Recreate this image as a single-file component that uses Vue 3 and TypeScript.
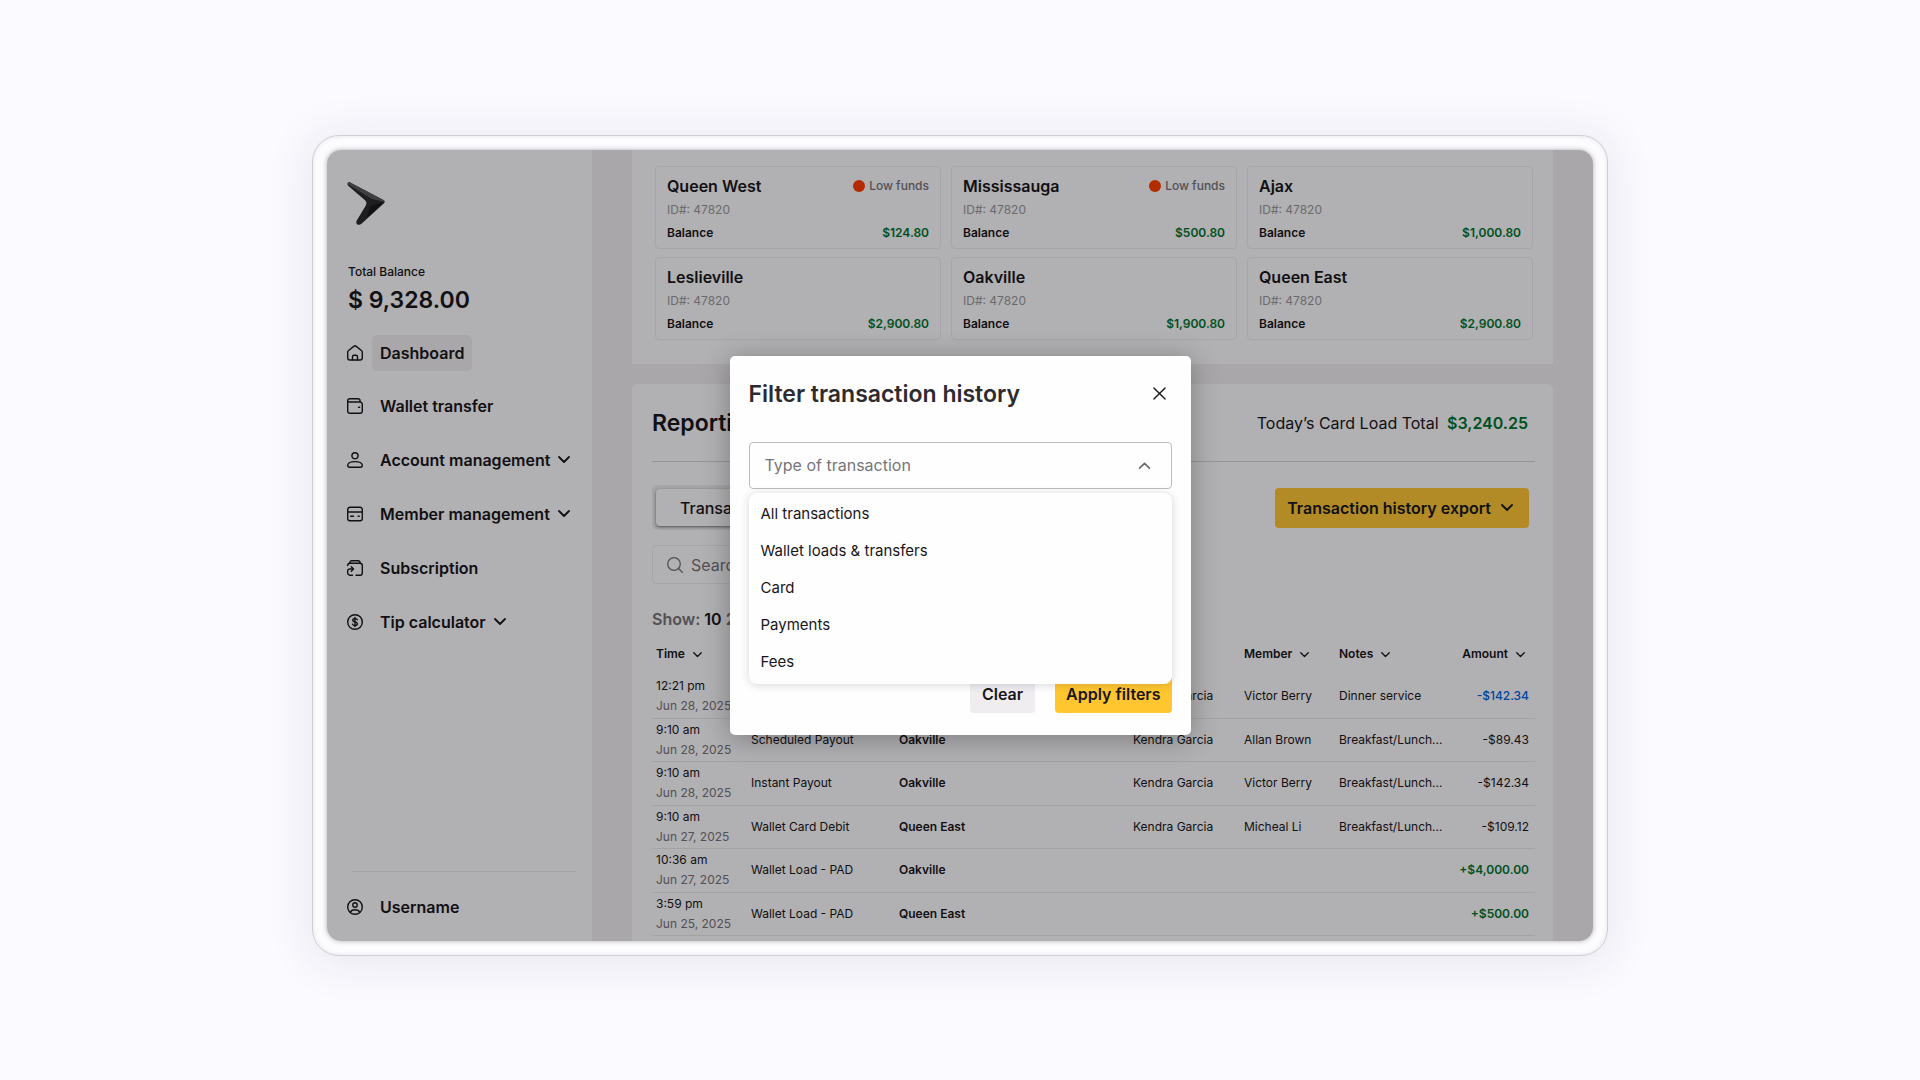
<script setup lang="ts">
import { ref } from 'vue'

interface NavItem { label: string; icon: string[]; active?: boolean; expandable?: boolean }
interface Wallet { name: string; balance: string; low?: boolean }
interface Row { time: string; date: string; type: string; wallet: string; by: string; member: string; notes: string; amount: string; tone?: string }

const nav: NavItem[] = [
  { label: 'Dashboard', active: true, icon: ['M.7 7.2c0-.8.3-1.300.9-1.700L7.100 1.100a1.500 1.500 0 0 1 1.800 0l5.500 4.400c.6.4.9.9.9 1.700v5.600a2.200 2.200 0 0 1-2.200 2.200H2.900a2.200 2.200 0 0 1-2.200-2.200z', 'M5.500 15v-3.200A1.500 1.500 0 0 1 7 10.300h2a1.500 1.500 0 0 1 1.500 1.500V15'] },
  { label: 'Wallet transfer', icon: ['M13 4V2.500A1.800 1.800 0 0 0 11.200.7H2.700a2 2 0 0 0-2 2V13A2.300 2.300 0 0 0 3 15.300h10a2.300 2.300 0 0 0 2.300-2.300V6.200A2.200 2.200 0 0 0 13.100 4H2.600A1.800 1.800 0 0 1 .9 3', 'M11.600 9.300h1'] },
  { label: 'Account management', expandable: true, icon: ['M8 .7a3.100 3.100 0 1 1 0 6.200A3.100 3.100 0 0 1 8 .7z', 'M8 9.600c4.400 0 7.300 1.700 7.300 3.700 0 1.200-.7 2-1.900 2H2.600c-1.200 0-1.900-.8-1.900-2 0-2 2.900-3.700 7.300-3.700z'] },
  { label: 'Member management', expandable: true, icon: ['M2.900 1.300h10.200a2.200 2.200 0 0 1 2.200 2.200v9a2.200 2.200 0 0 1-2.200 2.200H2.900a2.200 2.200 0 0 1-2.200-2.200v-9a2.200 2.200 0 0 1 2.200-2.200z', 'M.7 6h14.600', 'M3.700 10.300h2.800', 'M11.200 10.300h1'] },
  { label: 'Subscription', icon: ['M.7 5.500a2.200 2.200 0 0 1 2.200-2.200h10.200a2.200 2.200 0 0 1 2.200 2.200v7.600a2.200 2.200 0 0 1-2.200 2.200H9', 'M2.900 3.200C2.900 1.500 3.600.7 5 .7h6c1.400 0 2.100.8 2.100 2.500', 'M5.500 15.300H3.300a2.600 2.600 0 0 1-2.600-2.600V11a2 2 0 0 1 2-2h3.500', 'M4.300 6.800 6.500 9l-2.200 2.200'] },
  { label: 'Tip calculator', expandable: true, icon: ['M8 .7a7.300 7.300 0 1 1 0 14.600A7.300 7.300 0 0 1 8 .7z', 'M10.300 5.800C10 5 9.200 4.600 8 4.600c-1.400 0-2.300.6-2.300 1.600C5.700 8.500 10.400 7.400 10.400 9.800c0 1-1 1.700-2.400 1.700-1.300 0-2.200-.5-2.500-1.400', 'M8 3.400v9.200'] }
]

const wallets: Wallet[] = [
  { name: 'Queen West', balance: '$124.80', low: true },
  { name: 'Mississauga', balance: '$500.80', low: true },
  { name: 'Ajax', balance: '$1,000.80' },
  { name: 'Leslieville', balance: '$2,900.80' },
  { name: 'Oakville', balance: '$1,900.80' },
  { name: 'Queen East', balance: '$2,900.80' }
]

const columns = ['Time', 'Type', 'Location', 'By', 'Member', 'Notes', 'Amount']

const rows: Row[] = [
  { time: '12:21 pm', date: 'Jun 28, 2025', type: 'Instant Payout', wallet: 'Oakville', by: 'Kendra Garcia', member: 'Victor Berry', notes: 'Dinner service', amount: '-$142.34', tone: 'pending' },
  { time: '9:10 am', date: 'Jun 28, 2025', type: 'Scheduled Payout', wallet: 'Oakville', by: 'Kendra Garcia', member: 'Allan Brown', notes: 'Breakfast/Lunch...', amount: '-$89.43' },
  { time: '9:10 am', date: 'Jun 28, 2025', type: 'Instant Payout', wallet: 'Oakville', by: 'Kendra Garcia', member: 'Victor Berry', notes: 'Breakfast/Lunch...', amount: '-$142.34' },
  { time: '9:10 am', date: 'Jun 27, 2025', type: 'Wallet Card Debit', wallet: 'Queen East', by: 'Kendra Garcia', member: 'Micheal Li', notes: 'Breakfast/Lunch...', amount: '-$109.12' },
  { time: '10:36 am', date: 'Jun 27, 2025', type: 'Wallet Load - PAD', wallet: 'Oakville', by: '', member: '', notes: '', amount: '+$4,000.00', tone: 'credit' },
  { time: '3:59 pm', date: 'Jun 25, 2025', type: 'Wallet Load - PAD', wallet: 'Queen East', by: '', member: '', notes: '', amount: '+$500.00', tone: 'credit' }
]

const types = ['All transactions', 'Wallet loads & transfers', 'Card', 'Payments', 'Fees']
const selected = ref('')
const menuOpen = ref(true)
const search = ref('')

function choose(type: string) {
  selected.value = type
  menuOpen.value = false
}
function clear() {
  selected.value = ''
}
</script>

<template>
  <div class="stage">
    <div class="device">
      <div class="screen">
        <aside class="sidebar">
          <svg class="logo" viewBox="0 0 38 44" aria-hidden="true">
            <path d="M2.200.6 36.400 18.600q2.400 1.500.3 3.500L14.500 42.200q-2 1.600-4.200.7-1.600-1.300-.7-3.600L18.800 24q1.400-2.600-.5-4.900L.9 3.900Q-.6 1.300 2.200.6z" fill="#2c2a2e" />
            <path d="M2.200.6 36.400 18.600q1.300.8 1.200 1.900L25 17.500.9 2.700Q.7 1 2.200.6z" fill="#5c5a5f" />
            <path d="M23 25 37 20.500 20 36z" fill="#19171b" />
          </svg>
          <p class="total-label">Total Balance</p>
          <p class="total">$ 9,328.00</p>
          <nav class="nav">
            <a v-for="item in nav" :key="item.label" href="#" class="nav-item" :class="{ active: item.active }">
              <svg class="nav-icon" viewBox="0 0 16 16" aria-hidden="true"><path v-for="d in item.icon" :key="d" :d="d" /></svg>
              <span class="nav-label">{{ item.label }}</span>
              <svg v-if="item.expandable" class="chevron" viewBox="0 0 12 8" aria-hidden="true"><path d="m1 1 5 5 5-5" /></svg>
            </a>
          </nav>
          <a href="#" class="user">
            <svg class="nav-icon" viewBox="0 0 16 16" aria-hidden="true"><circle cx="8" cy="8" r="7.300" /><circle cx="8" cy="6" r="2.200" /><path d="M3.300 13.400c.6-1.800 2.400-2.700 4.700-2.700s4.100.9 4.700 2.700" /></svg>
            <span class="nav-label">Username</span>
          </a>
        </aside>

        <main class="main">
          <section class="panel wallets">
            <article v-for="w in wallets" :key="w.name" class="wallet">
              <div class="line">
                <h3>{{ w.name }}</h3>
                <span v-if="w.low" class="low"><i class="dot"></i>Low funds</span>
              </div>
              <p class="id">ID#: 47820</p>
              <div class="line balance"><span>Balance</span><span class="green">{{ w.balance }}</span></div>
            </article>
          </section>

          <section class="panel report">
            <header class="report-head">
              <h2>Reporting</h2>
              <p class="load">Today’s Card Load Total <strong class="green">$3,240.25</strong></p>
            </header>
            <div class="toolbar">
              <div class="tabs">
                <button type="button" class="tab current">Transactions</button>
                <button type="button" class="tab">Members</button>
              </div>
              <button type="button" class="export">
                Transaction history export
                <svg class="chevron" viewBox="0 0 12 8" aria-hidden="true"><path d="m1 1 5 5 5-5" /></svg>
              </button>
            </div>
            <label class="search">
              <svg viewBox="0 0 16 16" aria-hidden="true"><circle cx="7" cy="7" r="6.300" /><path d="m11.500 11.500 4 4" /></svg>
              <input v-model="search" type="search" placeholder="Search" aria-label="Search" />
            </label>
            <p class="show">Show: <b>10</b> 25 50</p>
            <table class="history">
              <colgroup><col class="c-time" /><col class="c-type" /><col /><col class="c-by" /><col class="c-member" /><col class="c-notes" /><col class="c-amount" /></colgroup>
              <thead>
                <tr>
                  <th v-for="c in columns" :key="c" scope="col">{{ c }}<svg class="sort" viewBox="0 0 12 8" aria-hidden="true"><path d="m1 1 5 5 5-5" /></svg></th>
                </tr>
              </thead>
              <tbody>
                <tr v-for="(r, i) in rows" :key="i">
                  <td><span class="time">{{ r.time }}</span><span class="date">{{ r.date }}</span></td>
                  <td>{{ r.type }}</td>
                  <td class="strong">{{ r.wallet }}</td>
                  <td>{{ r.by }}</td>
                  <td>{{ r.member }}</td>
                  <td>{{ r.notes }}</td>
                  <td class="amount" :class="r.tone">{{ r.amount }}</td>
                </tr>
              </tbody>
            </table>
          </section>
        </main>

        <div class="backdrop">
          <form class="modal" role="dialog" aria-labelledby="filter-title" @submit.prevent>
            <header class="modal-head">
              <h1 id="filter-title">Filter transaction history</h1>
              <button type="button" class="close" aria-label="Close">
                <svg viewBox="0 0 14 14" aria-hidden="true"><path d="m1 1 12 12M13 1 1 13" /></svg>
              </button>
            </header>
            <div class="field">
              <select v-model="selected" aria-label="Type of transaction" @mousedown.prevent="menuOpen = !menuOpen">
                <option value="">Type of transaction</option>
                <option v-for="t in types" :key="t" :value="t">{{ t }}</option>
              </select>
              <svg class="caret" viewBox="0 0 12 8" aria-hidden="true"><path d="m1.500 6.500 4.500-4.500 4.500 4.500" /></svg>
              <ul v-if="menuOpen" class="menu">
                <li v-for="t in types" :key="t"><button type="button" @click="choose(t)">{{ t }}</button></li>
              </ul>
            </div>
            <footer class="actions">
              <button type="button" class="clear" @click="clear">Clear</button>
              <button type="submit" class="apply">Apply filters</button>
            </footer>
          </form>
        </div>
      </div>
    </div>
  </div>
</template>

<style>
body {
  margin: 0;
  background: #fafaff;
}
</style>

<style scoped>
* {
  box-sizing: border-box;
}
h1, h2, h3, p, ul {
  margin: 0;
  padding: 0;
}
button, input, select {
  font: inherit;
  color: inherit;
  border: 0;
  background: none;
  padding: 0;
}
button {
  cursor: pointer;
}
svg {
  flex: none;
  fill: none;
  stroke: currentColor;
  stroke-linecap: round;
  stroke-linejoin: round;
}
.stage {
  min-height: 100vh;
  padding: 135px 16px 122px;
  font-family: Inter, "Liberation Sans", sans-serif;
  font-size: 16px;
  line-height: 20px;
  color: #19171b;
  background: #fafaff;
}
.device {
  width: 68%;
  min-width: 1296px;
  max-width: 1600px;
  margin: 0 auto;
  padding: 14px;
  border: 1px solid #d0ced4;
  border-radius: 27px;
  background: #fcfbfe;
  box-shadow: 0 4px 44px 6px rgba(40, 38, 60, 0.08), inset 0 0 4px rgba(60, 58, 70, 0.12);
}
.screen {
  position: relative;
  display: flex;
  overflow: hidden;
  border-radius: 14px;
  background: #f2eff3;
  box-shadow: 0 0 5px rgba(60, 58, 70, 0.4);
}

/* Sidebar */
.sidebar {
  display: flex;
  flex-direction: column;
  flex: none;
  width: 265px;
  padding: 31px 16px 16px 20px;
  background: #fefcff;
}
.logo {
  width: 38px;
  height: 45px;
  stroke: none;
}
.total-label {
  margin: 36px 0 0 1px;
  font-size: 12px;
  font-weight: 500;
}
.total {
  margin: 3px 0 0 1px;
  font-size: 23px;
  line-height: 30px;
  font-weight: 600;
}
.nav {
  display: flex;
  flex-direction: column;
  margin-top: 12px;
}
.nav-item, .user {
  display: flex;
  align-items: center;
  height: 54px;
  color: inherit;
  text-decoration: none;
  font-weight: 600;
}
.nav-item.active {
  height: 52px;
}
.nav-icon {
  width: 16px;
  height: 16px;
  stroke-width: 1.4;
}
.nav-label {
  margin-left: 9px;
  padding: 8px;
  border-radius: 5px;
}
.active .nav-label {
  background: #f2eff3;
}
.chevron {
  width: 12px;
  height: 8px;
  stroke-width: 1.8;
}
.user {
  position: relative;
  height: 36px;
  margin-top: auto;
}
.user::before {
  content: "";
  position: absolute;
  inset: -18px 0 auto 5px;
  border-top: 1px solid #ebe8ec;
}

/* Main column */
.main {
  display: flex;
  flex-direction: column;
  flex: 1;
  gap: 20px;
  padding: 0 40px;
}
.panel {
  background: #fefcff;
}
.wallets {
  display: grid;
  grid-template-columns: repeat(3, 1fr);
  gap: 8px 10px;
  padding: 16px 20px 24px 23px;
}
.wallet {
  height: 83px;
  padding: 9px 11px 0;
  border: 1px solid #f0edf1;
  border-radius: 4px;
}
.line {
  display: flex;
  justify-content: space-between;
}
h3 {
  font-size: 16px;
  font-weight: 600;
}
.low {
  display: flex;
  align-items: center;
  gap: 4px;
  font-size: 12px;
  font-weight: 500;
  color: #77757a;
}
.dot {
  width: 12px;
  height: 12px;
  border-radius: 50%;
  background: #ff4000;
}
.id {
  margin-top: 4px;
  font-size: 12px;
  color: #9b999d;
}
.balance {
  margin-top: 3px;
  font-size: 12px;
  font-weight: 600;
}
.green {
  color: #007532;
}
.report {
  padding: 0 18px 5px 20px;
  border-radius: 5px 5px 0 0;
}
.report-head {
  display: flex;
  align-items: center;
  justify-content: space-between;
  height: 78px;
  padding-right: 7px;
  border-bottom: 1px solid #d8d5da;
}
h2 {
  font-size: 23px;
  font-weight: 600;
}
.load strong {
  margin-left: 4px;
  font-weight: 600;
}
.toolbar {
  display: flex;
  justify-content: space-between;
  align-items: center;
  margin-top: 23px;
  padding-right: 6px;
}
.tabs {
  display: flex;
  height: 45px;
  padding: 4px;
  border-radius: 5px;
  background: #efecf0;
}
.tab {
  padding: 0 24px;
  border-radius: 4px;
}
.tab.current {
  background: #fefcff;
  box-shadow: 0 1px 3px rgba(0, 0, 0, 0.5);
  font-weight: 500;
}
.export {
  display: flex;
  align-items: center;
  gap: 10px;
  height: 40px;
  padding: 0 16px 0 12px;
  border-radius: 4px;
  background: #ffc737;
  font-weight: 600;
}
.search {
  display: flex;
  align-items: center;
  gap: 8px;
  width: 300px;
  height: 39px;
  margin-top: 15px;
  padding: 0 14px;
  border: 1px solid #efecf0;
  border-radius: 4px;
  color: #77757a;
}
.search svg {
  width: 16px;
  height: 16px;
  stroke-width: 1.3;
}
.search input {
  width: 100%;
  outline: 0;
}
.search input::placeholder {
  color: #77757a;
}
.show {
  margin-top: 25px;
  color: #77757a;
  font-weight: 600;
}
.show b {
  color: #19171b;
  font-weight: 600;
}
.history {
  width: 100%;
  margin-top: 15px;
  border-collapse: collapse;
  table-layout: fixed;
  font-size: 12px;
}
.c-time { width: 95px; }
.c-type { width: 148px; }
.c-by { width: 111px; }
.c-member { width: 95px; }
.c-notes { width: 110px; }
.c-amount { width: 90px; }
th {
  height: 30px;
  padding: 0 0 10px 4px;
  text-align: left;
  font-weight: 600;
  white-space: nowrap;
}
th:last-child {
  padding-right: 10px;
  text-align: right;
}
.sort {
  width: 9px;
  height: 6px;
  margin-left: 8px;
  stroke-width: 1.8;
}
td {
  height: 44px;
  padding: 0 0 0 4px;
  border-bottom: 1px solid #ebe8ec;
  white-space: nowrap;
}
tr:nth-child(even) td {
  height: 43px;
}
.time, .date {
  display: block;
}
.date {
  color: #77757a;
}
.strong {
  font-weight: 600;
}
.amount {
  padding-right: 6px;
  text-align: right;
}
.pending {
  color: #0064e6;
  font-weight: 500;
}
.credit {
  color: #007532;
  font-weight: 600;
}

/* Filter dialog over the dimmed page */
.backdrop {
  position: absolute;
  inset: 0;
  display: flex;
  align-items: center;
  justify-content: center;
  background: rgba(0, 0, 0, 0.3);
}
.modal {
  width: 461px;
  padding: 24px 19px 22px;
  border-radius: 5px;
  background: #fefefe;
  box-shadow: 0 4px 28px rgba(0, 0, 0, 0.3);
}
.modal-head {
  display: flex;
  align-items: center;
  justify-content: space-between;
  height: 28px;
  padding-right: 6px;
}
h1 {
  font-size: 23px;
  font-weight: 600;
  color: #2d2b2f;
}
.close {
  display: flex;
}
.close svg {
  width: 13px;
  height: 13px;
  stroke-width: 1.5;
}
.field {
  position: relative;
  margin-top: 34px;
}
select {
  display: block;
  appearance: none;
  width: 100%;
  height: 47px;
  padding: 0 15px;
  border: 1px solid #bdbbbf;
  border-radius: 4px;
  color: #77757a;
}
.caret {
  position: absolute;
  top: 19px;
  right: 21px;
  width: 13px;
  height: 9px;
  color: #6b696e;
  stroke-width: 1.6;
  pointer-events: none;
}
.menu {
  position: absolute;
  z-index: 1;
  inset: 51px 0 auto;
  padding: 3px 0;
  border-radius: 8px;
  background: #fefefe;
  box-shadow: 0 1px 8px rgba(50, 48, 60, 0.2);
  font-size: 15px;
  list-style: none;
}
.menu button {
  display: block;
  width: 100%;
  height: 37px;
  padding: 0 12px;
  text-align: left;
}
.actions {
  display: flex;
  justify-content: flex-end;
  gap: 20px;
  margin-top: 187px;
}
.actions button {
  height: 37px;
  padding: 0 12px;
  border-radius: 4px;
  font-weight: 600;
}
.actions .clear {
  background: #efedf0;
}
.actions .apply {
  padding: 0 11px;
  background: #ffc62f;
}
</style>
